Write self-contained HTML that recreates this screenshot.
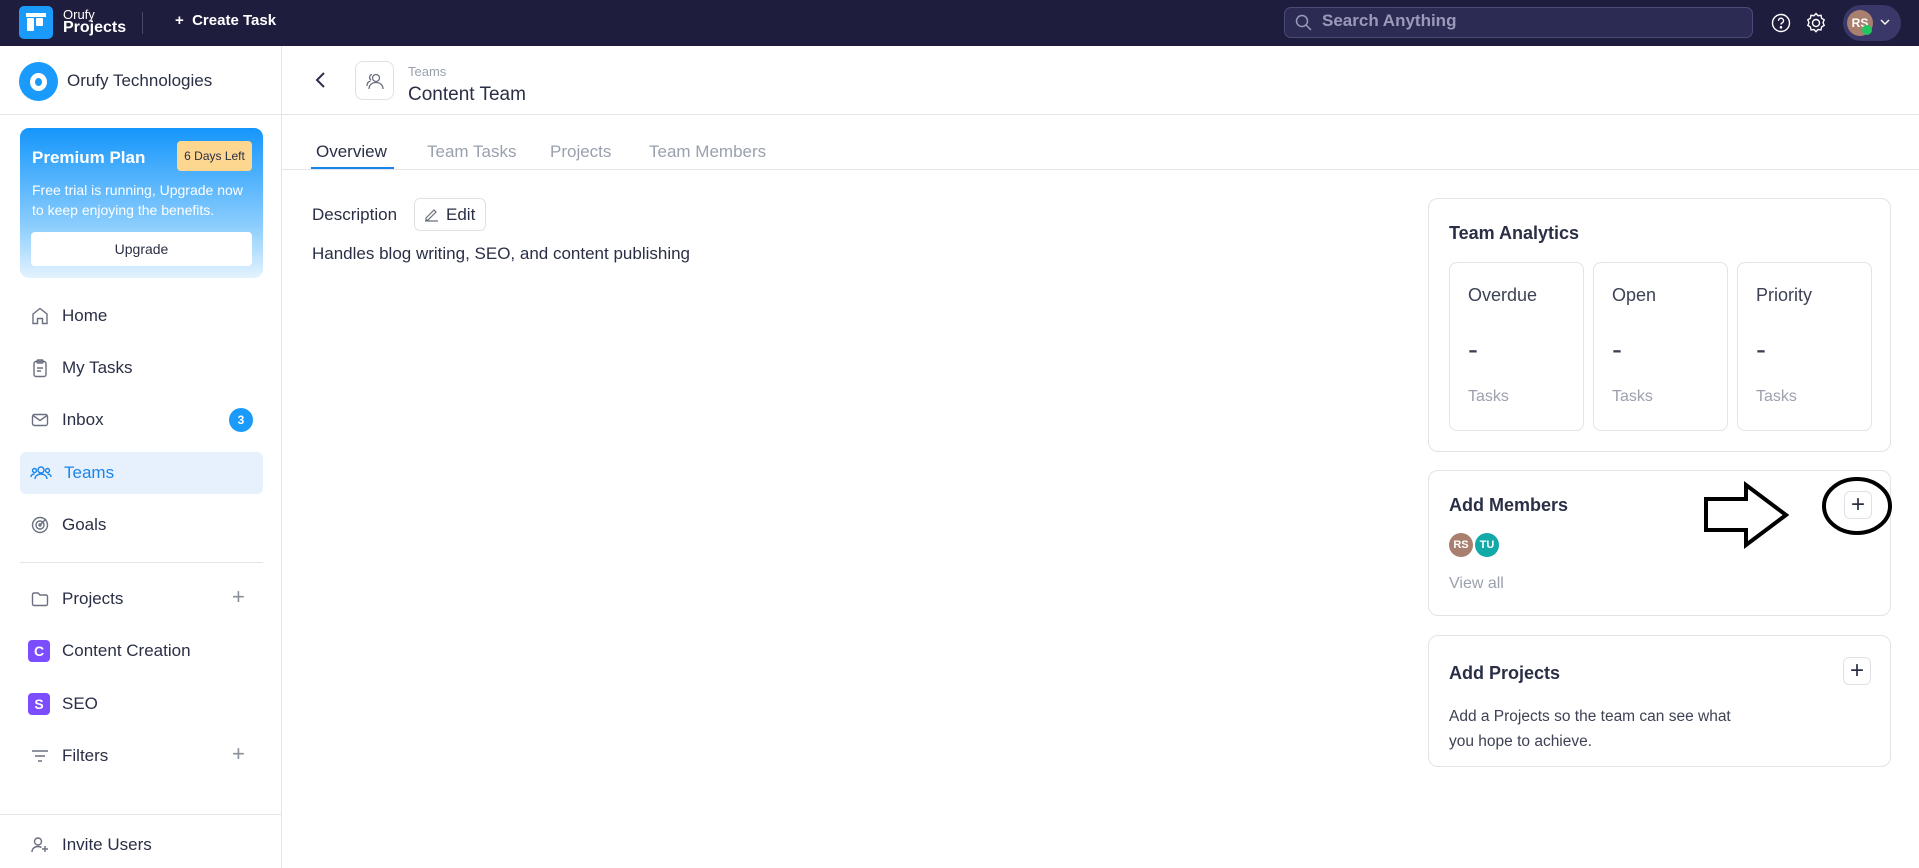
<!DOCTYPE html>
<html><head><meta charset="utf-8"><style>
*{box-sizing:border-box;margin:0;padding:0}
body{width:1919px;height:868px;overflow:hidden;font-family:"Liberation Sans",sans-serif;background:#fff;color:#2a2f45;position:relative}
.abs{position:absolute}
.hdr{left:0;top:0;width:1919px;height:46px;background:#1f1d3d}
.side{left:0;top:46px;width:282px;height:822px;border-right:1px solid #e3e5ea}
.nav{position:absolute;left:20px;width:243px;height:42px;display:flex;align-items:center;padding-left:10px;font-size:17px;color:#2a2f45}
.nav svg{margin-right:12px}
.card{position:absolute;border:1px solid #e1e3e8;border-radius:10px;background:#fff}
.box{position:absolute;top:63px;width:135px;height:169px;border:1px solid #e1e3e8;border-radius:8px}
.box .l{position:absolute;left:18px;top:22px;font-size:18px;color:#3d4254}
.box .d{position:absolute;left:18px;top:70px;font-size:30px;color:#3d4254}
.box .t{position:absolute;left:18px;top:125px;font-size:16px;color:#9aa0ad}
.plus{position:absolute;width:28px;height:28px;border:1px solid #dfe1e6;border-radius:6px;font-size:24px;line-height:25px;text-align:center;color:#2a2f45}
.tab{position:absolute;top:142px;font-size:17px;color:#9aa0ad}
</style></head><body>
<div class="abs hdr">
 <div class="abs" style="left:19px;top:6px;width:34px;height:33px;background:#1a9bfb;border-radius:5px"></div>
 <div class="abs" style="left:26px;top:13px;width:20px;height:4px;background:#fff"></div>
 <div class="abs" style="left:27px;top:18px;width:7px;height:13px;background:#fff;border-radius:1px"></div>
 <div class="abs" style="left:36px;top:18px;width:7px;height:8px;background:#fff;border-radius:1px"></div>
 <div class="abs" style="left:63px;top:7px;font-size:13px;color:#fff">Orufy</div>
 <div class="abs" style="left:63px;top:19px;font-size:16px;color:#fff;font-weight:bold">Projects</div>
 <div class="abs" style="left:142px;top:12px;width:1px;height:22px;background:#4a4868"></div>
 <div class="abs" style="left:175px;top:12px;font-size:15px;color:#fff;font-weight:bold">+ &nbsp;Create Task</div>
 <div class="abs" style="left:1284px;top:7px;width:469px;height:31px;border:1px solid #4a4a78;background:#2c2b54;border-radius:7px"></div>
 <svg class="abs" style="left:1295px;top:14px" width="17" height="17" viewBox="0 0 17 17" fill="none" stroke="#9a9ab8" stroke-width="1.5"><circle cx="7" cy="7" r="5.5"/><path d="M11 11l5 5"/></svg>
 <div class="abs" style="left:1322px;top:11px;font-size:17px;color:#9a9ab8;font-weight:bold">Search Anything</div>
 <svg class="abs" style="left:1771px;top:13px" width="20" height="20" viewBox="0 0 20 20" fill="none" stroke="#fff" stroke-width="1.4"><circle cx="10" cy="10" r="8.5"/><path d="M7.5 7.8a2.5 2.5 0 1 1 3.3 2.3c-.6.3-.8.7-.8 1.4"/><circle cx="10" cy="14.3" r=".6" fill="#fff"/></svg>
 <svg class="abs" style="left:1806px;top:12px" width="20" height="22" viewBox="0 0 20 22" fill="none" stroke="#fff" stroke-width="1.4"><path d="M10 1.5l2 2.2 3-.4.6 3 2.6 1.5-1.2 2.8 1.2 2.8-2.6 1.5-.6 3-3-.4-2 2.2-2-2.2-3 .4-.6-3-2.6-1.5 1.2-2.8-1.2-2.8 2.6-1.5.6-3 3 .4z"/><circle cx="10" cy="11" r="3.5"/></svg>
 <div class="abs" style="left:1843px;top:5px;width:58px;height:36px;background:#3a3868;border-radius:18px"></div>
 <div class="abs" style="left:1847px;top:10px;width:26px;height:26px;background:#a9806f;border-radius:50%;color:#fff;font-size:12px;font-weight:bold;line-height:26px;text-align:center">RS</div>
 <div class="abs" style="left:1862px;top:25px;width:10px;height:10px;background:#22c55e;border-radius:50%"></div>
 <svg class="abs" style="left:1880px;top:18px" width="10" height="8" viewBox="0 0 10 8" fill="none" stroke="#fff" stroke-width="1.4"><path d="M1 2l4 4 4-4"/></svg>
</div>

<div class="abs side">
 <div class="abs" style="left:19px;top:16px;width:39px;height:39px;background:#1a9bfb;border-radius:50%"></div>
 <div class="abs" style="left:30px;top:27px;width:17px;height:18px;border:5px solid #fff;border-radius:50%"></div>
 <div class="abs" style="left:67px;top:25px;font-size:17px;color:#2a2f45">Orufy Technologies</div>
 <div class="abs" style="left:0;top:68px;width:282px;height:1px;background:#e3e5ea"></div>
 <div class="abs" style="left:20px;top:82px;width:243px;height:150px;border-radius:9px;background:linear-gradient(#1596fc,#8bcdfd 65%,#e3f3fe)"></div>
 <div class="abs" style="left:32px;top:102px;font-size:17px;font-weight:bold;color:#fff">Premium Plan</div>
 <div class="abs" style="left:177px;top:95px;width:75px;height:30px;background:#fdd68f;border-radius:4px;font-size:12px;line-height:30px;text-align:center;color:#2a2f45">6 Days Left</div>
 <div class="abs" style="left:32px;top:134px;font-size:14px;line-height:20px;color:#fff">Free trial is running, Upgrade now<br>to keep enjoying the benefits.</div>
 <div class="abs" style="left:31px;top:186px;width:221px;height:34px;background:#fff;border-radius:4px;font-size:14px;line-height:34px;text-align:center;color:#2a2f45">Upgrade</div>

 <div class="nav" style="top:249px"><svg width="20" height="20" viewBox="0 0 20 20" fill="none" stroke="#6b7080" stroke-width="1.4"><path d="M3 8l7-5.5L17 8v9.5H12.5v-5h-5v5H3z"/></svg>Home</div>
 <div class="nav" style="top:301px"><svg width="20" height="20" viewBox="0 0 20 20" fill="none" stroke="#6b7080" stroke-width="1.4"><rect x="4" y="3.5" width="12" height="15" rx="2"/><rect x="7" y="2" width="6" height="3" rx="1"/><path d="M7 10h6M7 13h4"/></svg>My Tasks</div>
 <div class="nav" style="top:353px"><svg width="20" height="20" viewBox="0 0 20 20" fill="none" stroke="#6b7080" stroke-width="1.4"><rect x="2.5" y="4.5" width="15" height="11" rx="2"/><path d="M3 5.5l7 5 7-5"/></svg>Inbox</div>
 <div class="abs" style="left:229px;top:362px;width:24px;height:24px;border-radius:50%;background:#1a9bfb;color:#fff;font-size:12px;font-weight:bold;line-height:24px;text-align:center">3</div>
 <div class="nav" style="top:406px;background:#e6f1fd;border-radius:6px;color:#1a85e8;height:42px"><svg width="22" height="20" viewBox="0 0 22 20" fill="none" stroke="#1a85e8" stroke-width="1.4"><circle cx="11" cy="7" r="3"/><path d="M5 16c0-3 3-5 6-5s6 2 6 5"/><circle cx="4.5" cy="7.5" r="2"/><circle cx="17.5" cy="7.5" r="2"/><path d="M1 14c0-2 1.5-3 3.5-3M21 14c0-2-1.5-3-3.5-3"/></svg>Teams</div>
 <div class="nav" style="top:458px"><svg width="20" height="20" viewBox="0 0 20 20" fill="none" stroke="#6b7080" stroke-width="1.4"><circle cx="10" cy="10" r="7.5"/><circle cx="10" cy="10" r="4"/><circle cx="10" cy="10" r="1"/><path d="M10 10l6-6"/></svg>Goals</div>
 <div class="abs" style="left:20px;top:516px;width:243px;height:1px;background:#e3e5ea"></div>
 <div class="nav" style="top:532px"><svg width="20" height="20" viewBox="0 0 20 20" fill="none" stroke="#6b7080" stroke-width="1.4"><path d="M2.5 5.5a1.5 1.5 0 0 1 1.5-1.5h4l2 2h6a1.5 1.5 0 0 1 1.5 1.5v7.5a1.5 1.5 0 0 1-1.5 1.5H4a1.5 1.5 0 0 1-1.5-1.5z"/></svg>Projects</div>
 <div class="abs" style="left:232px;top:538px;font-size:22px;color:#8a8f9c">+</div>
 <div class="nav" style="top:584px"><span style="display:inline-block;width:22px;height:22px;background:#7c4dff;border-radius:4px;color:#fff;font-size:14px;font-weight:bold;line-height:22px;text-align:center;margin-right:12px;margin-left:-2px">C</span>Content Creation</div>
 <div class="nav" style="top:637px"><span style="display:inline-block;width:22px;height:22px;background:#7c4dff;border-radius:4px;color:#fff;font-size:14px;font-weight:bold;line-height:22px;text-align:center;margin-right:12px;margin-left:-2px">S</span>SEO</div>
 <div class="nav" style="top:689px"><svg width="20" height="20" viewBox="0 0 20 20" fill="none" stroke="#6b7080" stroke-width="1.4"><path d="M2 5h16M5 10h10M8 15h4"/></svg>Filters</div>
 <div class="abs" style="left:232px;top:695px;font-size:22px;color:#8a8f9c">+</div>
 <div class="abs" style="left:0;top:768px;width:282px;height:1px;background:#e3e5ea"></div>
 <div class="nav" style="top:778px"><svg width="20" height="20" viewBox="0 0 20 20" fill="none" stroke="#6b7080" stroke-width="1.4"><circle cx="8" cy="6.5" r="3.5"/><path d="M2 17c0-3.5 2.7-5.5 6-5.5 1.5 0 2.5.3 3.5 1M15 11v6M12 14h6"/></svg>Invite Users</div>
</div>

<svg class="abs" style="left:314px;top:71px" width="14" height="18" viewBox="0 0 14 18" fill="none" stroke="#2a2f45" stroke-width="2"><path d="M10 2L3 9l7 7"/></svg>
<div class="abs" style="left:355px;top:61px;width:39px;height:39px;border:1px solid #dfe1e6;border-radius:8px"></div>
<svg class="abs" style="left:364px;top:70px" width="22" height="22" viewBox="0 0 22 22" fill="none" stroke="#6b7080" stroke-width="1.3"><circle cx="12" cy="8" r="3.5"/><path d="M5 19c0-4 3-6.5 7-6.5s7 2.5 7 6.5M8 4.5a3 3 0 0 0-1 5.5M3 16c0-3 1.5-4.5 3.5-5"/></svg>
<div class="abs" style="left:408px;top:64px;font-size:13px;color:#9aa0ad">Teams</div>
<div class="abs" style="left:408px;top:46px;width:300px;height:68px;overflow:hidden"><div style="position:absolute;top:38px;font-size:19px;color:#2a2f45">Content Team</div></div>
<div class="abs" style="left:282px;top:114px;width:1637px;height:1px;background:#e3e5ea"></div>

<div class="tab" style="left:316px;color:#2a2f45">Overview</div>
<div class="abs" style="left:311px;top:167px;width:83px;height:3px;background:#1a85e8"></div>
<div class="tab" style="left:427px">Team Tasks</div>
<div class="tab" style="left:550px">Projects</div>
<div class="tab" style="left:649px">Team Members</div>
<div class="abs" style="left:282px;top:169px;width:1637px;height:1px;background:#e3e5ea"></div>

<div class="abs" style="left:312px;top:205px;font-size:17px">Description</div>
<div class="abs" style="left:414px;top:198px;width:72px;height:33px;border:1px solid #dfe1e6;border-radius:6px"></div>
<svg class="abs" style="left:424px;top:207px" width="15" height="15" viewBox="0 0 15 15" fill="none" stroke="#6b7080" stroke-width="1.2"><path d="M2 11l8-8 2 2-8 8H2zM1 14h13"/></svg>
<div class="abs" style="left:446px;top:205px;font-size:17px">Edit</div>
<div class="abs" style="left:312px;top:244px;font-size:17px">Handles blog writing, SEO, and content publishing</div>

<div class="card" style="left:1428px;top:198px;width:463px;height:254px">
 <div class="abs" style="left:20px;top:24px;font-size:18px;font-weight:bold">Team Analytics</div>
 <div class="box" style="left:20px"><div class="l">Overdue</div><div class="d">-</div><div class="t">Tasks</div></div>
 <div class="box" style="left:164px"><div class="l">Open</div><div class="d">-</div><div class="t">Tasks</div></div>
 <div class="box" style="left:308px"><div class="l">Priority</div><div class="d">-</div><div class="t">Tasks</div></div>
</div>

<div class="card" style="left:1428px;top:470px;width:463px;height:146px">
 <div class="abs" style="left:20px;top:24px;font-size:18px;font-weight:bold">Add Members</div>
 <div class="abs" style="left:20px;top:62px;width:24px;height:24px;border-radius:50%;background:#a9806f;color:#fff;font-size:11px;font-weight:bold;line-height:24px;text-align:center">RS</div>
 <div class="abs" style="left:46px;top:62px;width:24px;height:24px;border-radius:50%;background:#12a9a9;color:#fff;font-size:11px;font-weight:bold;line-height:24px;text-align:center">TU</div>
 <div class="abs" style="left:20px;top:104px;font-size:16px;color:#9aa0ad">View all</div>
 <div class="plus" style="left:415px;top:20px">+</div>
</div>

<div class="card" style="left:1428px;top:635px;width:463px;height:132px">
 <div class="abs" style="left:20px;top:27px;font-size:18px;font-weight:bold">Add Projects</div>
 <div class="plus" style="left:414px;top:21px">+</div>
 <div class="abs" style="left:20px;top:68px;font-size:15.5px;line-height:25px;color:#3d4254">Add a Projects so the team can see what<br>you hope to achieve.</div>
</div>

<svg class="abs" style="left:1700px;top:470px" width="219" height="120" viewBox="0 0 219 120" fill="none" stroke="#000" stroke-width="4">
 <path d="M6 29h40V15l40 30-40 30V60H6z"/>
 <ellipse cx="157" cy="36" rx="33" ry="27"/>
</svg>
</body></html>
